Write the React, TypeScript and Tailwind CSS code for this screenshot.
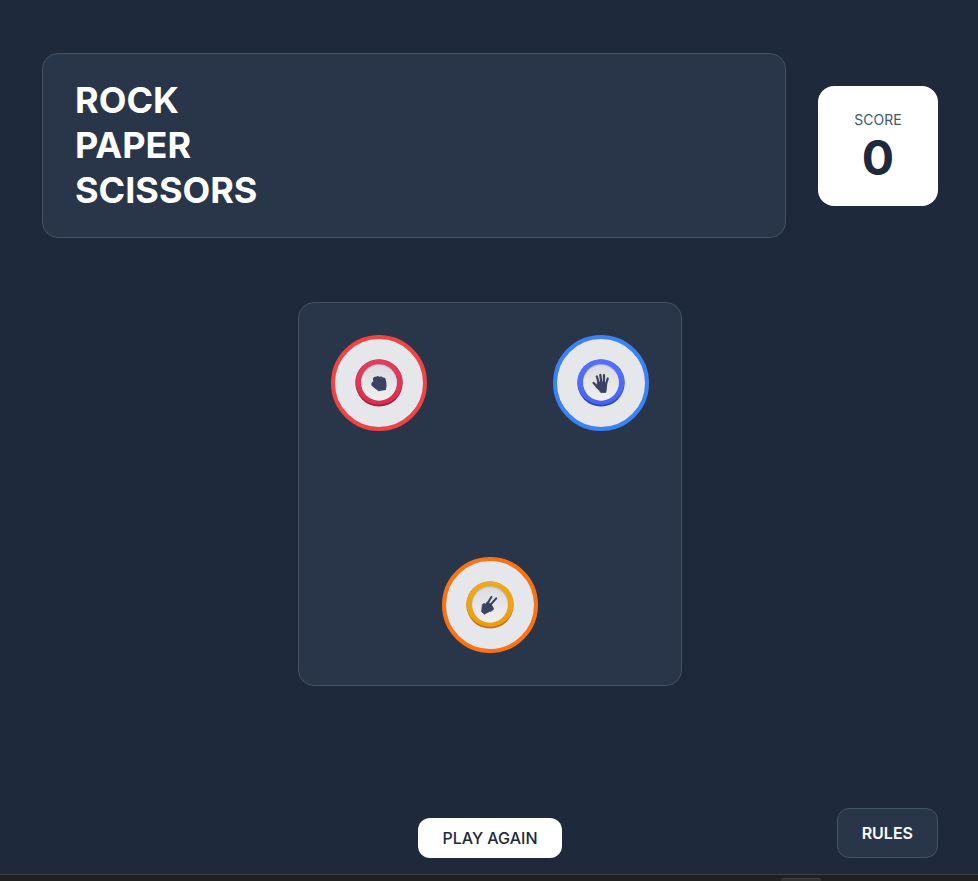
import type { ReactNode } from "react";

type Tone = { ring: string; light: string; base: string; shade: string; id: string };

const TONES: Record<"rock" | "paper" | "scissors", Tone> = {
  rock: { id: "rock", ring: "border-[#ef4444]", light: "#dd405d", base: "#dc2e4e", shade: "#a51c3c" },
  paper: { id: "paper", ring: "border-[#3b82f6]", light: "#5671f5", base: "#4865f4", shade: "#2a45c2" },
  scissors: { id: "scissors", ring: "border-[#f97316]", light: "#eca922", base: "#ec9e0e", shade: "#c76c1b" },
};

function Choice({ tone, label, children }: { tone: Tone; label: string; children: ReactNode }) {
  return (
    <button
      aria-label={label}
      className={`flex size-24 items-center justify-center rounded-full border-4 bg-gray-200 ${tone.ring}`}
    >
      <svg viewBox="0 0 48 48" className="size-12">
        <defs>
          <linearGradient id={`${tone.id}-ring`} x1="0" y1="0" x2="0" y2="1">
            <stop offset="0" stopColor={tone.light} />
            <stop offset="1" stopColor={tone.base} />
          </linearGradient>
          <linearGradient id={`${tone.id}-face`} x1="0" y1="0" x2="0" y2="1">
            <stop offset="0" stopColor="#dcdce0" />
            <stop offset="1" stopColor="#f0f0f0" />
          </linearGradient>
        </defs>
        <circle cx="24" cy="24" r="23.6" fill={tone.shade} />
        <ellipse cx="24" cy="23" rx="23.6" ry="22.7" fill={`url(#${tone.id}-ring)`} />
        <circle cx="24" cy="23.2" r="18" fill="#bbc2d8" />
        <circle cx="24" cy="24" r="17.7" fill={`url(#${tone.id}-face)`} />
        {children}
      </svg>
    </button>
  );
}

function Rock() {
  return (
    <path
      transform="translate(16.2 17) scale(.325)"
      fill="#3b4262"
      d="M45.06 12.22c-.642-8.096-9.734-7.269-9.734-7.269-3.837-6.765-9.832-1.865-9.832-1.865-4.606-6.63-10.38-.486-10.38-.486-9.957-1.074-9.571 7.066-9.571 7.066-.234 2.588 1.403 10.593 1.403 10.593-1.477-4.614-4.68-.784-4.68-.784-3.94 6.078-.975 9.405-.975 9.405 5.33 6.246 16.688 13.743 16.688 13.743 4.113 2.356 2.373 4.457 2.373 4.457l24.876-4.11.571-4.718c3.782-11.436-.739-26.032-.739-26.032z"
    />
  );
}

function Paper() {
  return (
    <g fill="#3b4262" stroke="#3b4262" strokeLinecap="round" strokeLinejoin="round">
      <path d="M20.6 23.5 27 22.8 29.7 24.5 29.5 29.5 28.8 33.4 23.8 33.6 22.2 31.3 19.4 28.6z" strokeWidth="0.8" />
      <path d="M16.5 23.8 18.6 26.2 21 29.2" fill="none" strokeWidth="2.1" />
      <path d="M19.8 17.5 22.4 26" fill="none" strokeWidth="2.3" />
      <path d="M23.3 15.9 24.5 25" fill="none" strokeWidth="2.3" />
      <path d="M27 16.2 26.9 25" fill="none" strokeWidth="2.3" />
      <path d="M30.8 19.4 28.6 26.5" fill="none" strokeWidth="2.1" />
    </g>
  );
}

function Scissors() {
  return (
    <g fill="#3b4262" stroke="#3b4262" strokeLinecap="round" strokeLinejoin="round">
      <path
        d="M16.6 23.4 18 22.4 19.4 23.3 21.2 21 24.6 22.9 26.6 25.6 27.6 28 25.8 29.9 23.6 30.4 21.6 31.4 18.6 33.2 15.6 30.8 15.9 28.2z"
        strokeWidth="0.8"
      />
      <path d="M25.4 16 20.6 23.9" fill="none" strokeWidth="2.1" />
      <path d="M30.2 17.4 23.6 24.8" fill="none" strokeWidth="2.1" />
    </g>
  );
}

export default function App() {
  return (
    <div className="flex h-[881px] w-full flex-col overflow-hidden bg-[#1e293b] font-['Inter',sans-serif]">
      <main className="flex h-[874px] w-full shrink-0 flex-col pr-10 pl-[42px] pt-[53px]">
        <header className="flex items-center gap-8">
          <h1 className="h-[185px] flex-1 rounded-2xl border border-[#465362] bg-[#293548] px-8 py-6 text-4xl leading-[45px] font-bold text-white">
            ROCK
            <br />
            PAPER
            <br />
            SCISSORS
          </h1>
          <div className="flex size-[120px] flex-col items-center justify-center rounded-2xl bg-white">
            <span className="text-sm text-slate-600">SCORE</span>
            <span className="mt-1 text-5xl font-bold text-slate-800">0</span>
          </div>
        </header>

        <section className="mt-16 flex size-96 flex-col items-center justify-between self-center rounded-2xl border border-[#465362] bg-[#293548] p-8">
          <div className="flex w-full justify-between">
            <Choice tone={TONES.rock} label="Rock"><Rock /></Choice>
            <Choice tone={TONES.paper} label="Paper"><Paper /></Choice>
          </div>
          <Choice tone={TONES.scissors} label="Scissors"><Scissors /></Choice>
        </section>

        <footer className="mt-auto mb-4 grid grid-cols-[1fr_auto_1fr] items-end">
          <span />
          <button className="h-10 w-[143.4px] rounded-xl bg-white text-base font-medium text-slate-800">PLAY AGAIN</button>
          <button className="h-[50px] justify-self-end rounded-xl border border-[#465362] bg-[#293548] px-6 text-base font-semibold text-white">
            RULES
          </button>
        </footer>
      </main>
      <div className="flex h-[7px] shrink-0 items-end border-t border-[#3c4043] bg-[#202020] pl-[781px]">
        <div className="h-[3px] w-10 rounded-t-sm border-t border-[#454545] bg-[#303030]" />
      </div>
    </div>
  );
}
